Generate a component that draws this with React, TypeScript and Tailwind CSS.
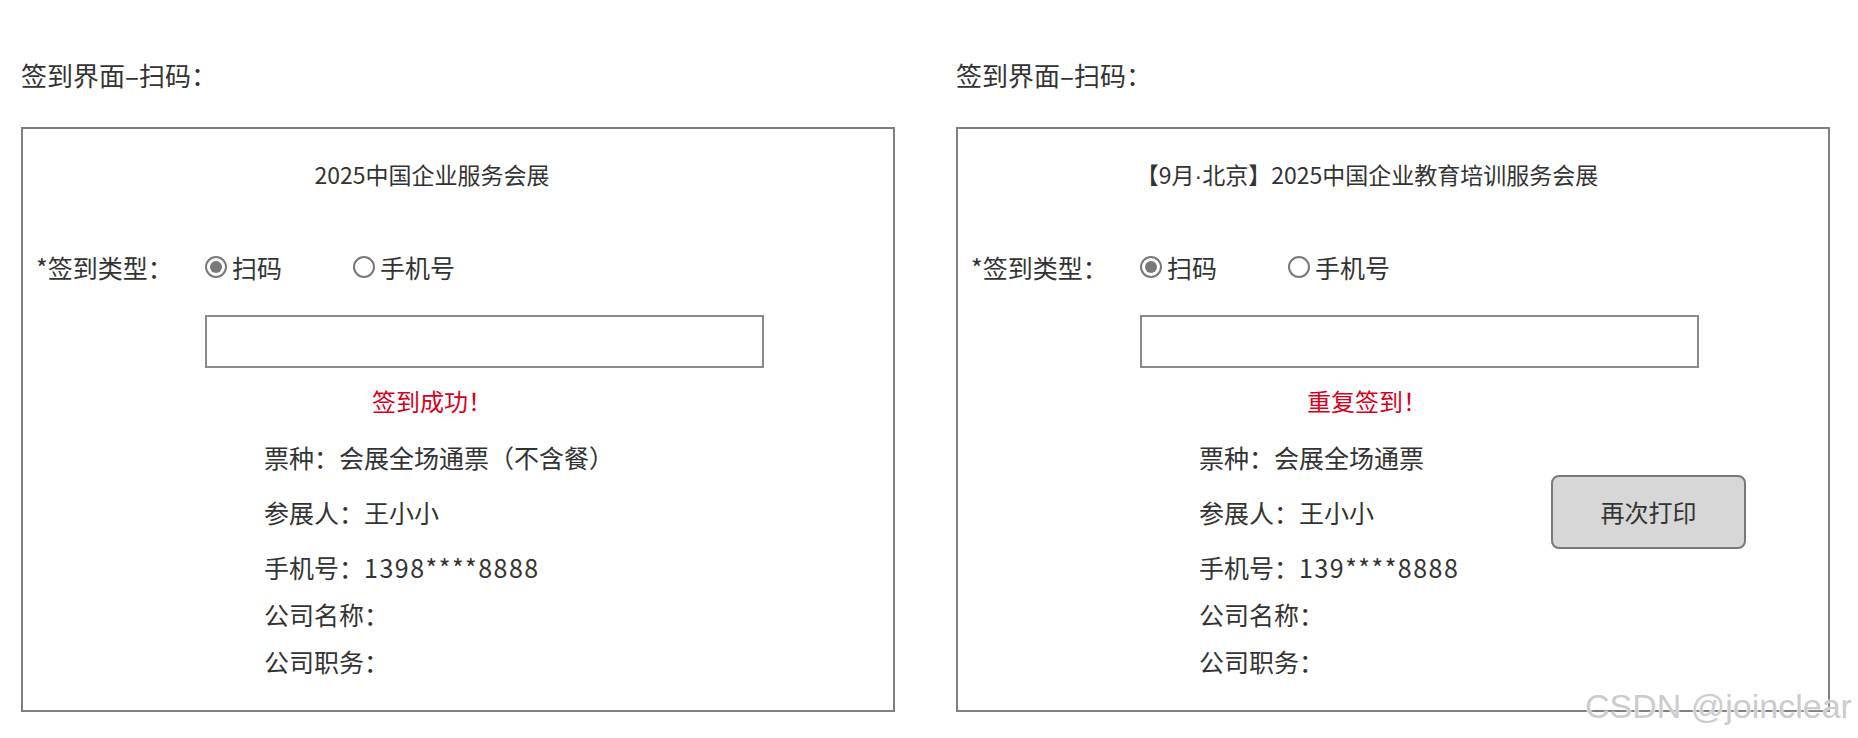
import React from 'react';

type Info = { label: string; value: string; wide?: boolean };

interface PanelProps {
  title: React.ReactNode;
  message: string;
  info: Info[];
  showReprint?: boolean;
}

const Radio = ({ checked, label }: { checked?: boolean; label: string }) => (
  <div className="flex items-center gap-[5px]">
    <span className="w-[22px] h-[22px] rounded-full border-2 border-[#797979] flex items-center justify-center bg-white">
      {checked && <span className="w-[12px] h-[12px] rounded-full bg-[#797979]" />}
    </span>
    <span>{label}</span>
  </div>
);

// one "签到界面" mock: heading + bordered card
const Panel = ({ title, message, info, showReprint }: PanelProps) => {
  const lineGaps = ['mt-0', 'mt-[21px]', 'mt-[21px]', 'mt-[13px]', 'mt-[13px]'];

  const infoList = (
    <div className="flex flex-col text-[25px] leading-[34px]">
      {info.map((item, i) => (
        <p key={item.label} className={`${lineGaps[i]} h-[34px] whitespace-nowrap`}>
          {item.label}：<span className={item.wide ? 'tracking-[1.5px]' : ''}>{item.value}</span>
        </p>
      ))}
    </div>
  );

  return (
    <div className="flex flex-col">
      <h2 className="text-[26px] leading-[36px] h-[36px] whitespace-nowrap">签到界面–扫码：</h2>

      <div className="mt-[34px] w-[874px] h-[585px] border-2 border-[#7f7f7f] flex flex-col">
        {/* Title */}
        <p className="mt-[29px] h-[32px] pr-[52px] text-center text-[23px] leading-[32px] whitespace-nowrap">{title}</p>

        {/* Sign-in type */}
        <div className="mt-[59px] h-[36px] pl-[13px] flex items-center text-[25px] leading-[36px]">
          <span className="w-[169px] whitespace-nowrap">*签到类型：</span>
          <Radio checked label="扫码" />
          <div className="ml-[71px]">
            <Radio label="手机号" />
          </div>
        </div>

        {/* Scan input */}
        <div className="mt-[30px] ml-[182px] w-[559px] h-[53px] border-2 border-[#8a8a8a] bg-white" />

        {/* Result message */}
        <p className="mt-[17px] h-[32px] pr-[52px] text-center text-[24px] leading-[32px] text-[#d9001b]">{message}</p>

        {/* Details */}
        <div className="mt-[23px] ml-[241px] flex items-start">
          <div className="w-[352px]">{infoList}</div>
          {showReprint && (
            <button className="mt-[35px] w-[195px] h-[74px] rounded-[8px] border-2 border-[#797979] bg-[#d7d7d7] text-[24px] text-[#333333]">
              再次打印
            </button>
          )}
        </div>
      </div>
    </div>
  );
};

export default function App() {
  return (
    <div
      className="relative w-[1858px] h-[738px] overflow-hidden bg-white text-[#333333]"
      style={{ fontFamily: '"Noto Sans CJK SC", "Noto Sans", sans-serif' }}
    >
      <div className="flex pl-[21px] pt-[57px] gap-[61px]">
        <Panel
          title="2025中国企业服务会展"
          message="签到成功！"
          info={[
            { label: '票种', value: '会展全场通票（不含餐）' },
            { label: '参展人', value: '王小小' },
            { label: '手机号', value: '1398****8888', wide: true },
            { label: '公司名称', value: '' },
            { label: '公司职务', value: '' },
          ]}
        />
        <Panel
          title={
            <>
              【9月<span style={{ fontFamily: '"Liberation Sans", Arial, sans-serif' }}>·</span>北京】2025中国企业教育培训服务会展
            </>
          }
          message="重复签到！"
          showReprint
          info={[
            { label: '票种', value: '会展全场通票' },
            { label: '参展人', value: '王小小' },
            { label: '手机号', value: '139****8888', wide: true },
            { label: '公司名称', value: '' },
            { label: '公司职务', value: '' },
          ]}
        />
      </div>

      {/* watermark */}
      <span
        className="absolute left-[1585px] top-[684px] whitespace-nowrap text-[34px] leading-[44px] text-[#cccccc] [text-shadow:0_0_2px_#ffffff,0_0_1px_#ffffff]"
        style={{ fontFamily: '"Liberation Sans", Arial, sans-serif' }}
      >
        CSDN @joinclear
      </span>
    </div>
  );
}
